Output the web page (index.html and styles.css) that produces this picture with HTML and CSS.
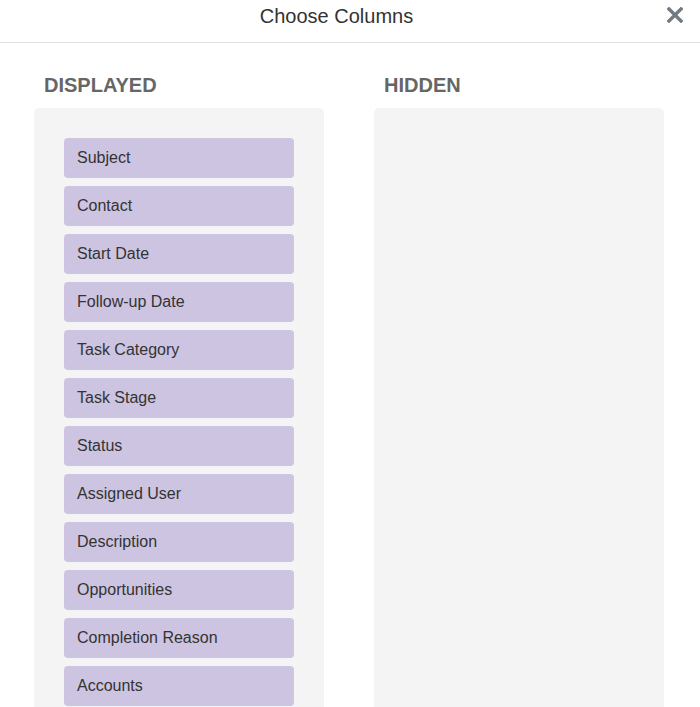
FILE: index.html
```html
<!DOCTYPE html>
<html lang="en">
<head>
<meta charset="utf-8">
<title>Choose Columns</title>
<link rel="stylesheet" href="styles.css">
</head>
<body>
<div class="dialog">
  <header class="dialog-header">
    <h1 class="dialog-title">Choose Columns</h1>
    <button class="close-btn" aria-label="Close">
      <svg width="16" height="16" viewBox="0 0 16 16"><path d="M2 2 L14 14 M14 2 L2 14" stroke="#727a82" stroke-width="3.4" stroke-linecap="square" fill="none"/></svg>
    </button>
  </header>
  <div class="columns">
    <section class="column">
      <h2 class="column-heading">DISPLAYED</h2>
      <div class="panel">
        <div class="chip">Subject</div>
        <div class="chip">Contact</div>
        <div class="chip">Start Date</div>
        <div class="chip">Follow-up Date</div>
        <div class="chip">Task Category</div>
        <div class="chip">Task Stage</div>
        <div class="chip">Status</div>
        <div class="chip">Assigned User</div>
        <div class="chip">Description</div>
        <div class="chip">Opportunities</div>
        <div class="chip">Completion Reason</div>
        <div class="chip">Accounts</div>
      </div>
    </section>
    <section class="column">
      <h2 class="column-heading">HIDDEN</h2>
      <div class="panel"></div>
    </section>
  </div>
</div>
</body>
</html>
```

FILE: styles.css
```css
* { box-sizing: border-box; }
html, body {
  margin: 0;
  padding: 0;
  background: #fff;
  font-family: "Liberation Sans", Arial, sans-serif;
  color: #333;
}
.dialog-header {
  display: flex;
  align-items: flex-start;
  height: 43px;
  border-bottom: 1px solid #e2e2e2;
}
.dialog-title {
  flex: 1;
  margin: 0;
  padding: 5px 0 0 6px;
  font-size: 20px;
  line-height: 23px;
  font-weight: normal;
  text-align: center;
  color: #333;
}
.close-btn {
  width: 16px;
  height: 16px;
  margin: 7px 17px 0 0;
  padding: 0;
  border: 0;
  background: none;
  display: block;
}
.close-btn svg { display: block; }
.columns {
  display: grid;
  grid-template-columns: 290px 290px;
  column-gap: 50px;
  padding: 0 36px 0 34px;
}
.column {
  display: flex;
  flex-direction: column;
}
.column-heading {
  margin: 30px 0 11px;
  padding-left: 10px;
  font-size: 20px;
  line-height: 24px;
  font-weight: bold;
  color: #666;
}
.panel {
  flex: 1;
  background: #f4f4f4;
  border-radius: 5px;
  padding: 30px 30px 30px 30px;
  display: flex;
  flex-direction: column;
  gap: 8px;
}
.chip {
  height: 40px;
  line-height: 40px;
  padding-left: 13px;
  background: #cdc4e2;
  border-radius: 4px;
  font-size: 16px;
  color: #333;
}
```
